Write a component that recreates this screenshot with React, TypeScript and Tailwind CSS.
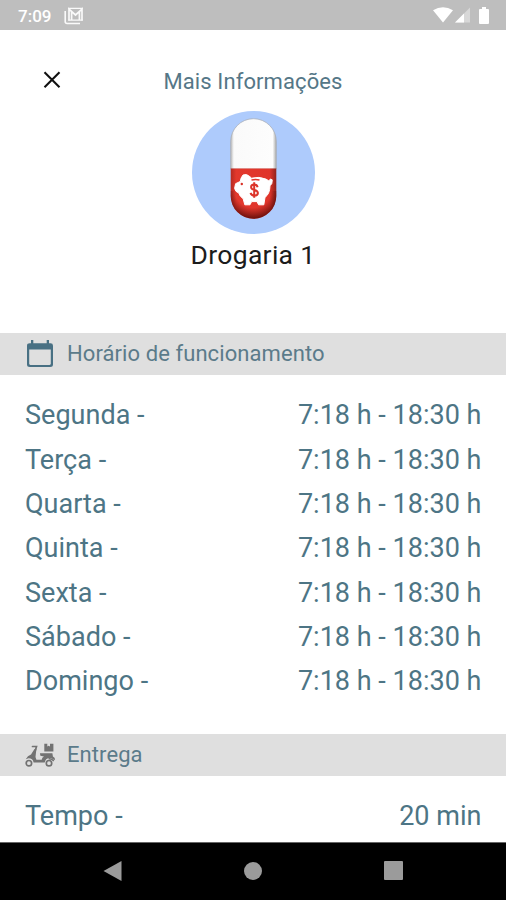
import type { ReactNode } from 'react';

const days = ['Segunda', 'Terça', 'Quarta', 'Quinta', 'Sexta', 'Sábado', 'Domingo'];

function StatusBar() {
  return (
    <header className="flex h-[30px] shrink-0 items-center bg-[#bebebe] pl-[18px] pr-[17px] text-white">
      <span className="w-[46px] pt-px text-[17px] font-medium leading-[30px]">7:09</span>
      <svg className="mt-px h-[18px] w-[20px]" viewBox="0 0 20 18" fill="none" stroke="#fafafa">
        <path d="M1.2 4v10.5q0 2 2 2H16" strokeWidth="1.6" />
        <path d="M4.2 1.4h14.6M4.2 13.2h14.6" strokeWidth="1.2" />
        <path d="M5 13.5V2.2L11.5 8 18 2.2v11.3M7.6 5v8M15.4 5v8" strokeWidth="1.7" />
      </svg>
      <div className="ml-auto flex items-center">
        <svg className="h-[16px] w-[20px]" viewBox="0 0 20 16">
          <path d="M0 3.2Q10-2.8 20 3.2L10 15.4Z" fill="white" />
        </svg>
        <svg className="ml-[2px] h-[16px] w-[15px]" viewBox="0 0 15 16">
          <path d="M15 .5V15.5H0Z" fill="#d8d8d8" />
          <path d="M9 6.5v9H0Z" fill="white" />
        </svg>
        <svg className="ml-[9px] h-[17px] w-[10px]" viewBox="0 0 10 17">
          <path d="M3 0h4v2h2q1 0 1 1v13q0 1-1 1H1q-1 0-1-1V3q0-1 1-1h2Z" fill="white" />
        </svg>
      </div>
    </header>
  );
}

function PillLogo() {
  return (
    <svg className="ml-px h-[124px] w-[124px]" viewBox="0 0 124 124">
      <defs>
        <linearGradient id="shell" x1="0" x2="1" y1="0" y2="0">
          <stop offset="0" stopColor="#b9b9b9" />
          <stop offset=".07" stopColor="#fafafa" />
          <stop offset=".92" stopColor="#fdfdfd" />
          <stop offset="1" stopColor="#a9a9a9" />
        </linearGradient>
        <linearGradient id="base" x1="0" x2="1" y1="0" y2="0">
          <stop offset="0" stopColor="#b52a21" />
          <stop offset=".12" stopColor="#e2382d" />
          <stop offset=".85" stopColor="#e0352b" />
          <stop offset="1" stopColor="#8f211b" />
        </linearGradient>
        <radialGradient id="depth" gradientUnits="userSpaceOnUse" cx="61" cy="78" r="31">
          <stop offset=".6" stopColor="#5a0806" stopOpacity="0" />
          <stop offset="1" stopColor="#4a0503" stopOpacity=".9" />
        </radialGradient>
      </defs>
      <circle cx="61.5" cy="61.5" r="61.5" fill="#aecbfc" />
      <path d="M38.7 58V30.5a22.8 22.8 0 0 1 45.6 0V58Z" fill="url(#shell)" stroke="#a8abb0" strokeWidth=".7" />
      <path d="M38.7 57.5h45.6V85a22.8 22.8 0 0 1-45.6 0Z" fill="url(#base)" />
      <path d="M38.7 80h45.6v5a22.8 22.8 0 0 1-45.6 0Z" fill="url(#depth)" />
      <path
        d="M51 64q3.5-1.8 6.8 1.6l1.8 1.6q7.5-2 14.2.8l3 1.8q1.3-.2 1.4-1.8l2 .8q.4 4.2-2.2 6-.2 8.2-5 11.6l-1.2 7.4h-5.2l-1.6-3.2h-5.4l-1.6 3.2h-5.2l-1.6-6q-3.6-2.400-4.600-6-3-.6-4-4.400l1-4.700 4.600-2.200q.6-4 2.800-6.500Z"
        fill="white"
        stroke="white"
        strokeWidth="1"
      />
      <path d="M59.5 69q4-.9 8 0" fill="none" stroke="#e2382d" strokeWidth="1.5" />
      <circle cx="49.8" cy="73" r="1.2" fill="#d93228" />
      <path
        d="M65.6 76.2q-.6-2.800-3.600-2.700-3 .2-2.900 2.700.1 2 3.100 2.700 3.700.8 3.700 3.200-.2 2.500-3.500 2.500-3 0-3.900-2.700M62.200 71.300v15.400"
        fill="none"
        stroke="#dc342a"
        strokeWidth="2"
      />
    </svg>
  );
}

function CalendarIcon() {
  return (
    <svg className="h-[28px] w-[26px]" viewBox="0 0 26 30" preserveAspectRatio="none">
      <path fillRule="evenodd" d="M4 0h2.3v3.5h13.4V0H22v3.5h1.5Q26 3.5 26 6.1v20.2q0 2.7-2.8 2.7H2.8Q0 29 0 26.3V6.1Q0 3.5 2.8 3.5H4ZM2.2 10.3v15.2q0 1.2 1.2 1.2h19.2q1.2 0 1.2-1.2V10.3Z" fill="#487083" />
    </svg>
  );
}

function ScooterIcon() {
  return (
    <svg className="h-[25px] w-[31px]" viewBox="0 0 31 25">
      <g fill="none" stroke="#727272">
        <circle cx="3.9" cy="20.2" r="2.7" strokeWidth="1.7" />
        <circle cx="24" cy="20.2" r="2.7" strokeWidth="1.7" />
        <path d="M7.5 3.5h4L10.500 7" strokeWidth="1.7" strokeLinecap="round" />
        <path d="M28.8 18q-2-2.600-5.200-2.200" strokeWidth="1.4" />
      </g>
      <path d="M9.5 6h1.900l-.9 8 .9 2.700h5.300q.2-2.200 2.300-3.200l-3.600-.7-.5-2.600h12.500l.5 3.300q2.200 1 2.200 3l-1 .4q-2-2-5-2-3.600.4-4.400 4.600H8.600q-.8-4.200-5-4.200l-2.800 1Q2.500 12.600 6 11.600Z" fill="#727272" />
      <path d="M19.3.8h3v2.800l1.300-.8 1.400.8V.8h3.400v7.800h-9.100Z" fill="#727272" />
    </svg>
  );
}

function SectionHeader({ icon, children }: { icon: ReactNode; children: ReactNode }) {
  return (
    <h2 className="flex h-[42px] shrink-0 items-center bg-[#dfdfdf] text-[22px] tracking-[0.08px] text-[#5b7b8a]">
      <span className="flex w-[67px]">{icon}</span>
      <span className="-mt-[2px]">{children}</span>
    </h2>
  );
}

function InfoRow({ label, value }: { label: string; value: string }) {
  return (
    <div className="flex h-[44.35px] shrink-0 items-center justify-between pl-[25px] pr-[24.5px] text-[27px] tracking-[0.02px] text-[#4d7585]">
      <span>{label} -</span>
      <span>{value}</span>
    </div>
  );
}

export default function App() {
  return (
    <div className="flex h-[900px] w-[506px] flex-col overflow-hidden bg-white font-['Roboto',sans-serif]">
      <StatusBar />
      <div className="grid h-[81px] shrink-0 grid-cols-[1fr_auto_1fr] items-center">
        <button className="ml-[43px] mt-[18px] w-fit" aria-label="Fechar">
          <svg className="block h-[18px] w-[18px]" viewBox="0 0 18 18" stroke="#111" strokeWidth="2.1">
            <path d="M1.5 1.2 16.5 16.2M16.5 1.2 1.5 16.2" />
          </svg>
        </button>
        <h1 className="pt-[22px] text-[22px] leading-[22px] tracking-[0.1px] text-[#557787]">Mais Informações</h1>
      </div>
      <section className="flex h-[222px] shrink-0 flex-col items-center">
        <PillLogo />
        <p className="mt-[3px] text-[26.5px] leading-[34px] tracking-[0.3px] text-[#1c1c1c]">Drogaria 1</p>
      </section>
      <SectionHeader icon={<span className="pl-[27px]"><CalendarIcon /></span>}>Horário de funcionamento</SectionHeader>
      <div className="flex h-[359px] shrink-0 flex-col pt-[18.4px]">
        {days.map((day) => (
          <InfoRow key={day} label={day} value="7:18 h - 18:30 h" />
        ))}
      </div>
      <SectionHeader icon={<span className="pl-[25px]"><ScooterIcon /></span>}>Entrega</SectionHeader>
      <div className="flex h-[66px] shrink-0 flex-col pt-[18.5px]">
        <InfoRow label="Tempo" value="20 min" />
      </div>
      <nav className="flex h-[58px] shrink-0 items-center justify-between border-t border-[#666] bg-black pb-[2px] pl-[103px] pr-[103px]">
        <svg className="h-[22px] w-[19px]" viewBox="0 0 19 22"><path d="M.5 11 18.5 1v20Z" fill="#9b9b9b" /></svg>
        <span className="h-[18px] w-[18px] rounded-full bg-[#9b9b9b]" />
        <span className="h-[19px] w-[19px] rounded-[1px] bg-[#9b9b9b]" />
      </nav>
    </div>
  );
}
